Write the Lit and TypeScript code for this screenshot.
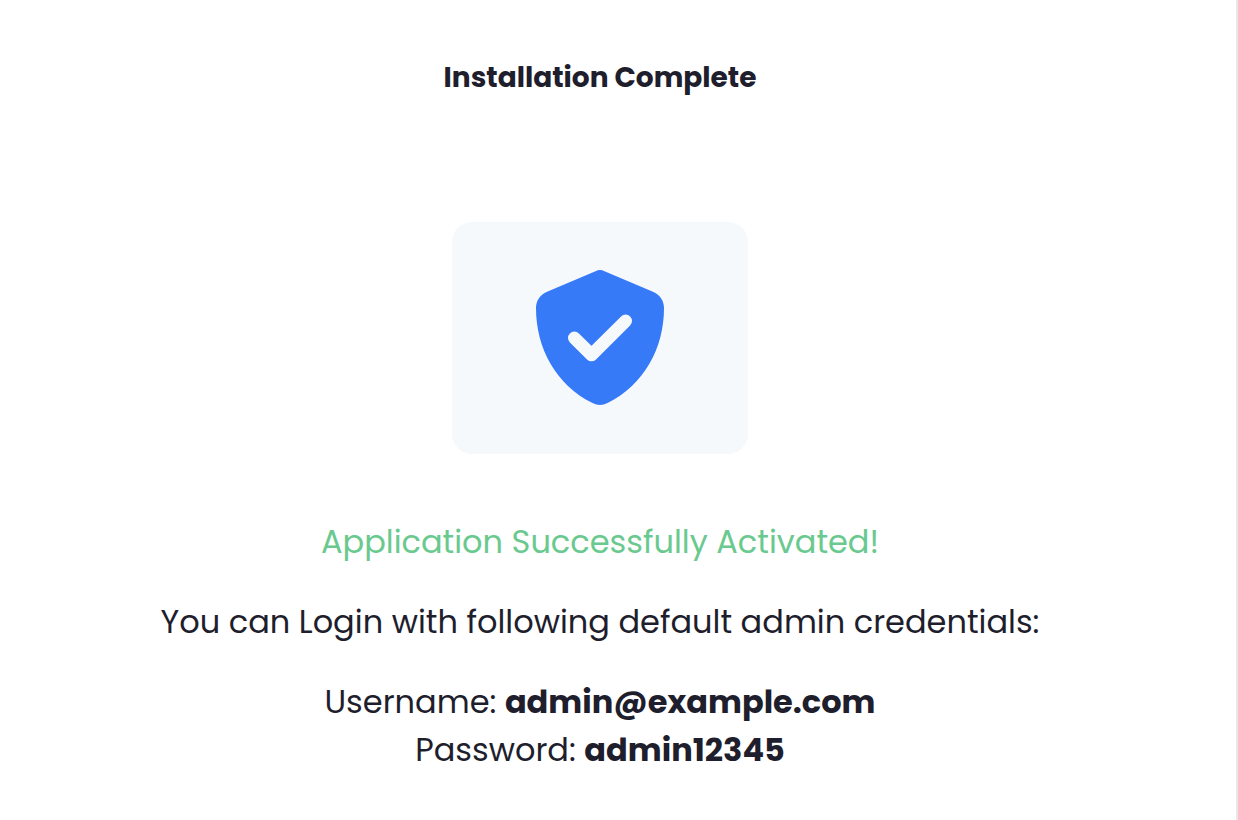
import { LitElement, html, css } from "lit";
import { customElement, property } from "lit/decorators.js";

@customElement("shield-badge")
class ShieldBadge extends LitElement {
  static styles = css`
    :host {
      display: block;
      padding: 48px 84px;
      border-radius: 20px;
      background: #f5f9fc;
    }
    .shield {
      display: block;
      width: 128px;
      height: 136px;
    }
  `;

  render() {
    return html`
      <svg class="shield" viewBox="0 0 128 136" aria-hidden="true">
        <path
          fill="#367af7"
          d="M68.500 1.200Q64 -1 59.500 1.200L10.500 22C4 24.800 0 31 0 38C0 78 20 115 56.500 133Q64 137 71.500 133C108 115 128 78 128 38C128 31 124 24.800 117.500 22Z"
        />
        <path
          fill="none"
          stroke="#f5f9fc"
          stroke-width="12.8"
          stroke-linecap="round"
          stroke-linejoin="round"
          d="M38.400 68L55.500 84.900L89.600 51"
        />
      </svg>
    `;
  }
}

@customElement("app-root")
class AppRoot extends LitElement {
  @property() username = "admin@example.com";
  @property() password = "admin12345";

  static styles = css`
    :host {
      display: block;
      box-sizing: border-box;
      min-height: 100vh;
      border-right: 2px solid #e8e8ea;
      background: #fff;
      color: #1e1e2d;
      font-family: Poppins, "Open Sans", sans-serif;
      font-size: 32px;
      line-height: 48px;
    }
    .page {
      display: flex;
      flex-direction: column;
      align-items: center;
      padding: 54px 36px 46px 0;
      text-align: center;
    }
    h1 {
      margin: 0 0 120px;
      font-size: 28px;
      font-weight: 700;
    }
    p {
      margin: 0 0 32px;
    }
    .success {
      margin-top: 64px;
      color: #69c98e;
    }
    strong {
      font-weight: 700;
    }
  `;

  render() {
    return html`
      <main class="page">
        <h1>Installation Complete</h1>
        <shield-badge></shield-badge>
        <p class="success">Application Successfully Activated!</p>
        <p>You can Login with following default admin credentials:</p>
        <div>Username: <strong>${this.username}</strong></div>
        <div>Password: <strong>${this.password}</strong></div>
      </main>
    `;
  }
}
